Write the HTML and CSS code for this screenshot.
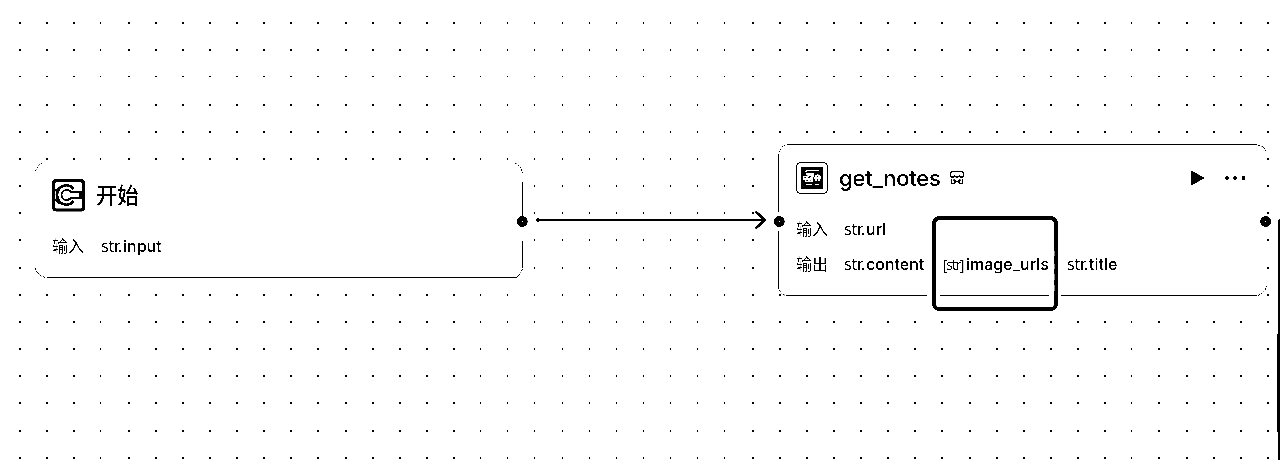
FILE: index.html
```html
<!DOCTYPE html>
<html lang="zh-CN">
<head>
<meta charset="utf-8">
<title>Workflow</title>
<link rel="stylesheet" href="styles.css">
</head>
<body>
<main class="canvas">
  <svg class="grid" width="1280" height="460" id="grid"></svg>

  <section class="node start">
    <svg class="frame" width="489" height="118">
      <path class="line" d="M487.500 21V62M487.500 80V107M12 116.500H481"/>
      <path class="corner" d="M0.500 10Q2 5 7 2M480 2Q486 5 487.500 12M0.500 107Q2 114 10 116.500M481 116.500Q486 114 487.500 107"/>
    </svg>
    <header class="head">
      <svg class="icon" width="33" height="33" viewBox="0 0 33 33">
        <rect x="1.700" y="1.700" width="29.800" height="29.300" rx="2.500" fill="#fff" stroke="#000" stroke-width="3.200"/>
        <path d="M21.500 10A9.200 9.800 0 1 0 21.500 22" fill="none" stroke="#000" stroke-width="2.600"/>
        <path d="M3 12L7 8M3 20L7 25" stroke="#000" stroke-width="1.300"/>
        <path d="M19 13Q16.500 10.500 13.500 11Q9.500 12 9.500 16Q10 20.500 14 21Q17 21 19 19" fill="none" stroke="#000" stroke-width="1.800"/>
        <path d="M18 12.500L30 13.500M18 19.500L30 18.500M28.500 13V19" stroke="#000" stroke-width="2.200"/>
      </svg>
      <h2 class="title cn">开始</h2>
    </header>
    <div class="row"><span class="label">输入</span><span class="type wide">str.</span><span class="name input">input</span></div>
  </section>

  <section class="node notes">
    <svg class="frame" width="490" height="153">
      <path class="line" d="M10 0.500H479M0.500 12V68M0.500 87V143M9 151.500H149M283 151.500H479"/>
      <path class="corner" d="M0.500 12Q1 2 10 0.500M480 1Q487 2 488.500 9M0.500 143Q2 151 9 151.500M480 151.500Q487 149 488.500 142"/>
    </svg>
    <header class="head">
      <svg class="icon" width="32" height="32" viewBox="0 0 32 32">
        <rect x="0.500" y="0.500" width="31" height="31" rx="4" fill="#fff" stroke="#000"/>
        <rect x="5" y="5" width="22" height="22" rx="1" fill="#000"/>
        <path d="M10 8.500H23M9 10L11 8.500M10 22.500H16M19 22.500H23" stroke="#fff" stroke-width="1.300"/>
        <path d="M10 12H18M7 15L12 14L9 19M12 13L16 13.500L13 19M18 12L15 20M19 14L22 13L25 15M18 16H25M20 13V19M23 14V19M7 17H15M9 19.500H17" fill="none" stroke="#fff" stroke-width="1.500"/>
      </svg>
      <h2 class="title">get_notes</h2>
      <svg class="plug" width="16" height="16" viewBox="0 0 16 16" fill="none" stroke="#000" stroke-width="1.500">
        <path d="M2.500 1.500H13.500L14.500 3V6L12.500 7.500L10.500 6L8 7.500L5.500 6L3.500 7.500L1.500 6V3ZM2.500 9V13.500H5.500L6.500 11.500H9.500L10.500 13.500H13.500V9M4.500 9.500L6.500 11.500M11.500 9.500L9.500 11.500"/>
      </svg>
      <svg class="actions" width="56" height="20" viewBox="0 0 56 20">
        <path d="M1 2.500L15 10L1 17.500Z"/>
        <circle cx="37" cy="10" r="1.900"/><circle cx="45.200" cy="10" r="1.900"/><circle cx="53.500" cy="10" r="1.900"/>
      </svg>
    </header>
    <div class="row"><span class="label">输入</span><span class="type">str.</span><span class="name url">url</span></div>
    <div class="row"><span class="label">输出</span><span class="type">str.</span><span class="name content">content</span><span class="list">[str]</span><span class="name urls">image_urls</span><span class="type last">str.</span><span class="name">title</span></div>
  </section>

  <svg class="overlay" width="1280" height="460">
    <path d="M538 220H765" stroke="#000" stroke-width="2"/>
    <circle cx="538" cy="220" r="2"/>
    <path d="M755.500 211.500L765 220L755.500 228.500" fill="none" stroke="#000" stroke-width="2.400"/>
    <g fill="#fff" stroke="#000" stroke-width="4.600">
      <circle cx="522.300" cy="221.500" r="3.100"/>
      <circle cx="779.300" cy="221.500" r="3.100"/>
      <circle cx="1265.600" cy="221.500" r="3.100"/>
    </g>
    <rect x="934" y="218" width="122" height="91" rx="5.500" fill="none" stroke="#000" stroke-width="4"/>
    <path d="M940 295.500H1049" stroke="#000"/>
    <path d="M1054 251V256M1054 264V269M1054 274V280M1054 285V291" stroke="#fff"/>
    <path d="M1278 460V220L1280 219V460ZM1277 334H1280V432H1277Z"/>
  </svg>
</main>
<script src="grid.js"></script>
</body>
</html>
```
FILE: styles.css
```css
body {
  margin: 0;
  background: #fff;
}

.canvas {
  position: relative;
  width: 1280px;
  height: 460px;
  overflow: hidden;
  background: #fff;
  color: #000;
  font-family: Inter, "Noto Sans CJK SC", sans-serif;
  filter: grayscale(1) contrast(12);
}

.grid,
.overlay,
.frame {
  position: absolute;
  left: 0;
  top: 0;
}

.grid {
  shape-rendering: crispEdges;
}

.node {
  position: absolute;
  box-sizing: border-box;
  background: #fff;
  border-radius: 12px;
}

.start {
  left: 35px;
  top: 161px;
  width: 489px;
  height: 118px;
  padding: 18px 17px;
}

.notes {
  left: 778px;
  top: 144px;
  width: 489px;
  height: 153px;
  padding: 18px 18px;
}

.line {
  stroke: #000;
  fill: none;
  shape-rendering: crispEdges;
}

.corner {
  stroke: #000;
  fill: none;
  stroke-width: 1;
  stroke-dasharray: 2 1;
}

.head {
  display: flex;
  align-items: center;
  height: 32px;
}

.icon {
  flex: none;
}

.title {
  margin: 0 0 0 11px;
  width: 101px;
  font-size: 22px;
  line-height: 32px;
  font-weight: 500;
  letter-spacing: -0.2px;
}

.cn {
  margin-left: 11px;
  font-size: 21.5px;
}

.plug {
  margin-left: 9px;
}

.actions {
  margin-left: auto;
  margin-right: 3px;
}

.row {
  display: flex;
  align-items: baseline;
  height: 24px;
  line-height: 24px;
  white-space: nowrap;
}

.start .row {
  margin-top: 22px;
}

.notes .row {
  margin-top: 22px;
}

.notes .row + .row {
  margin-top: 11px;
}

.label {
  width: 48px;
  font: 350 16px/24px "Noto Sans CJK SC", sans-serif;
}

.type {
  width: 22px;
  font: 16px/24px "Noto Sans", sans-serif;
  letter-spacing: -0.25px;
}

.wide {
  margin-left: 1px;
}

.name {
  font-size: 16px;
  font-weight: 550;
}

.content {
  width: 77px;
}

.list {
  width: 23px;
  font: 14px/24px "Noto Sans", sans-serif;
  letter-spacing: -1.3px;
}

.urls {
  width: 101px;
}
```
FILE: grid.js
```js
const grid = document.getElementById("grid");
for (let r = 0; r < 17; r++) {
  for (let c = 0; c < 47; c++) {
    const dot = document.createElementNS("http://www.w3.org/2000/svg", "rect");
    const narrow = c === 3 || (c > 16 && c < 27) || c === 41;
    dot.setAttribute("x", Math.round(19 + c * 27.13));
    dot.setAttribute("y", Math.round(22 + r * 27.17));
    dot.setAttribute("width", narrow ? 1 : 2);
    dot.setAttribute("height", r === 2 ? 1 : 2);
    grid.appendChild(dot);
  }
}
```
